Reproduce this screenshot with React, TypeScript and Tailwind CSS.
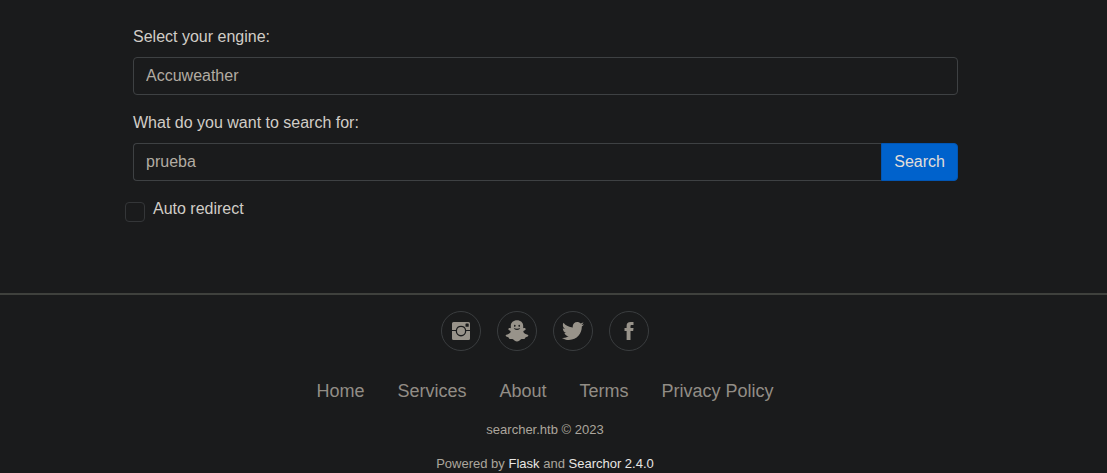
import React from "react";

const engines = ["Accuweather", "Amazon", "Bing", "DuckDuckGo", "Google", "YouTube"];
const links = ["Home", "Services", "About", "Terms", "Privacy Policy"];

function InstagramIcon() {
  return (
    <svg viewBox="0 0 24 24" className="size-6" fill="currentColor" aria-hidden="true">
      <path
        fillRule="evenodd"
        d="M4.5 3H19.5A1.5 1.5 0 0 1 21 4.5V11H17.2A5.3 5.3 0 0 0 6.8 11H3V4.5A1.5 1.5 0 0 1 4.5 3ZM17.1 4.4A.6.6 0 0 0 16.5 5V7.2A.6.6 0 0 0 17.1 7.8H19.1A.6.6 0 0 0 19.7 7.2V5A.6.6 0 0 0 19.1 4.4Z"
      />
      <path d="M3 12.1H6.7A5.3 5.3 0 0 0 17.3 12.1H21V19.5A1.5 1.5 0 0 1 19.5 21H4.5A1.5 1.5 0 0 1 3 19.5Z" />
      <circle cx="12" cy="12" r="4" />
    </svg>
  );
}

function SnapchatIcon() {
  return (
    <svg viewBox="0 0 24 24" className="size-6" fill="currentColor" aria-hidden="true">
      <path
        fillRule="evenodd"
        d="M12 1.2C8.4 1.2 5.8 3.5 5.8 6.8V9.2C5.1 9.2 4.4 8.9 3.8 9.2C3 9.7 3.2 10.8 4.1 11.3C5 11.8 6 12.2 5.6 13C5 14.4 3.2 15.3 1.4 15.7C.4 16 .5 17.2 1.3 17.6C2.1 18.1 3.2 18.1 3.6 18.6C3.9 19.2 4 19.8 4.8 19.9C5.8 20 7 19.7 8 20.2C9.2 21 10.3 22.5 12 22.5S14.8 21 16 20.2C17 19.7 18.2 20 19.2 19.9C20 19.8 20.1 19.2 20.4 18.6C20.8 18.1 21.9 18.1 22.7 17.6C23.5 17.2 23.6 16 22.6 15.7C20.8 15.3 19 14.4 18.4 13C18 12.2 19 11.8 19.9 11.3C20.8 10.8 21 9.7 20.2 9.2C19.6 8.9 18.9 9.2 18.2 9.2V6.8C18.2 3.5 15.6 1.2 12 1.2ZM9.8 5.7A.8 1.1 0 1 1 9.8 7.9A.8 1.1 0 1 1 9.8 5.7ZM14.2 5.7A.8 1.1 0 1 1 14.2 7.9A.8 1.1 0 1 1 14.2 5.7ZM8.8 9.1C10.6 10.1 13.4 10.1 15.2 9.1C14.8 10.3 13.6 11 12 11S9.2 10.3 8.8 9.1Z"
      />
    </svg>
  );
}

function TwitterIcon() {
  return (
    <svg viewBox="0 0 512 512" className="size-6" fill="currentColor" aria-hidden="true">
      <path d="M492 109.5c-17.4 7.7-36 12.9-55.6 15.3 20-12 35.4-31 42.6-53.6-18.7 11.1-39.4 19.2-61.5 23.5C399.8 75.8 374.6 64 346.8 64c-53.5 0-96.8 43.4-96.8 96.9 0 7.6.8 15 2.5 22.1-80.5-4-151.9-42.6-199.6-101.3-8.3 14.3-13.1 31-13.1 48.7 0 33.6 17.2 63.3 43.2 80.7-16-.4-31-4.8-44-12.1v1.2c0 47 33.4 86.1 77.7 95-8.1 2.2-16.7 3.4-25.5 3.4-6.2 0-12.3-.6-18.2-1.8 12.3 38.5 48.1 66.5 90.5 67.3-33.1 26-74.9 41.5-120.3 41.5-7.8 0-15.5-.5-23.1-1.4C62.8 432 113.7 448 168.3 448 346.6 448 444 300.3 444 172.2c0-4.2-.1-8.4-.3-12.5C462.6 146 479 129 492 109.5z" />
    </svg>
  );
}

function FacebookIcon() {
  return (
    <svg viewBox="0 0 512 512" className="size-6" fill="currentColor" aria-hidden="true">
      <path d="M288 192v-38.1c0-17.2 3.8-25.9 30.5-25.9H352V64h-55.9c-68.5 0-91.1 31.4-91.1 85.3V192h-45v64h45v192h83V256h56.9l7.6-64H288z" />
    </svg>
  );
}

const socials = [
  { name: "Instagram", Icon: InstagramIcon },
  { name: "Snapchat", Icon: SnapchatIcon },
  { name: "Twitter", Icon: TwitterIcon },
  { name: "Facebook", Icon: FacebookIcon },
];

export default function App() {
  return (
    <div className="min-h-screen bg-[#1a1b1c] font-['Liberation_Sans',Arial,sans-serif] text-base text-[#d1cdc7]">
      <main className="pl-4 pr-8 pt-[25px]">
        <form className="mx-auto w-full max-w-[825px]" onSubmit={(e) => e.preventDefault()}>
          <label htmlFor="engine" className="mb-2 block">
            Select your engine:
          </label>
          <select
            id="engine"
            defaultValue="Accuweather"
            className="mb-4 block h-[38px] w-full appearance-none rounded border border-[#3e4143] bg-transparent px-3 text-[#b2aca2]"
          >
            {engines.map((name) => (
              <option key={name}>{name}</option>
            ))}
          </select>
          <label htmlFor="query" className="mb-2 block">
            What do you want to search for:
          </label>
          <div className="mb-4 flex h-[38px]">
            <input
              id="query"
              type="text"
              defaultValue="prueba"
              className="min-w-0 flex-1 rounded-l border border-r-0 border-[#3e4143] bg-transparent px-3 text-[#b2aca2]"
            />
            <button type="submit" className="rounded-r border border-[#0256b4] bg-[#0062cc] px-3 text-[#e0ded9]">
              Search
            </button>
          </div>
          <div className="-ml-2 flex items-start gap-2">
            <input
              id="redirect"
              type="checkbox"
              className="mt-[5px] size-5 appearance-none rounded border border-[#343638] checked:bg-[#0062cc]"
            />
            <label htmlFor="redirect">Auto redirect</label>
          </div>
        </form>
      </main>
      <footer className="mt-[71px] border-t-2 border-[#3f413d] pr-[17px] pt-4 text-center">
        <div className="flex justify-center gap-4">
          {socials.map(({ name, Icon }) => (
            <a
              key={name}
              href="#"
              aria-label={name}
              className="flex size-10 items-center justify-center rounded-full border border-[#3a3d3f] text-[#98938a]"
            >
              <Icon />
            </a>
          ))}
        </div>
        <nav className="mt-[26px] flex flex-wrap justify-center gap-x-[33px] text-lg text-[#928d86]">
          {links.map((text) => (
            <a key={text} href="#">
              {text}
            </a>
          ))}
        </nav>
        <p className="mt-[15px] text-[13px] leading-5 text-[#aca69d]">searcher.htb © 2023</p>
        <p className="mt-[14px] text-[13px] leading-5 text-[#aca69d]">
          Powered by{" "}
          <a href="#" className="text-[#e8e6e3]">
            Flask
          </a>{" "}
          and{" "}
          <a href="#" className="text-[#e8e6e3]">
            Searchor 2.4.0
          </a>
        </p>
      </footer>
    </div>
  );
}
